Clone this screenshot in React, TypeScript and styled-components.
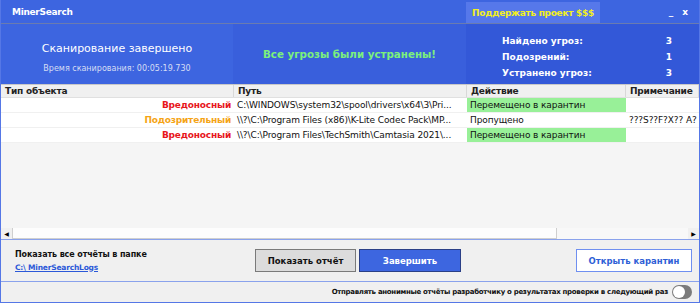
import React from "react";
import styled, { createGlobalStyle } from "styled-components";

const GlobalStyle = createGlobalStyle`
  html, body { margin: 0; padding: 0; }
  body { font-family: "DejaVu Sans", Verdana, sans-serif; }
  * { box-sizing: border-box; }
`;

const Window = styled.div`
  width: 700px;
  height: 303px;
  border: 1px solid #5577e6;
  border-top: none;
  background: #f0f0f0;
  display: flex;
  flex-direction: column;
  overflow: hidden;
`;

const TitleBar = styled.div`
  height: 24px;
  background: #3d65e0;
  border-bottom: 1px solid #6a7bb0;
  display: grid;
  grid-template-columns: 465px 134px 1fr;
  align-items: stretch;
`;

const Title = styled.div`
  color: #fff;
  font-weight: bold;
  font-size: 9px;
  letter-spacing: -0.3px;
  padding-left: 11px;
  display: flex;
  align-items: center;
`;

const DonateButton = styled.div`
  margin-top: 2px;
  background: #5678ea;
  color: #f2f020;
  font-weight: bold;
  font-size: 9px;
  letter-spacing: -0.3px;
  white-space: nowrap;
  display: flex;
  align-items: center;
  justify-content: center;
`;

const WinButtons = styled.div`
  display: flex;
  justify-content: flex-end;
  align-items: center;
  gap: 9px;
  padding-right: 11px;
  color: #fff;
  font-weight: bold;
  font-size: 9px;
`;

const Header = styled.div`
  height: 60px;
  display: grid;
  grid-template-columns: 232px 233px 1fr;
`;

const HeaderCell = styled.div<{ $bg: string; $padTop?: number }>`
  background: ${(p) => p.$bg};
  display: flex;
  flex-direction: column;
  align-items: center;
  justify-content: center;
  padding-top: ${(p) => p.$padTop || 0}px;
`;

const ScanTitle = styled.div`
  color: #fff;
  font-size: 11px;
`;

const ScanTime = styled.div`
  color: #d6ddf4;
  font-size: 8px;
  margin-top: 9px;
`;

const AllClear = styled.div`
  color: #7cf07c;
  font-weight: bold;
  font-size: 10.3px;
`;

const Stats = styled.div`
  width: 170px;
  margin-left: 36px;
  align-self: flex-start;
  display: flex;
  flex-direction: column;
  gap: 3px;
`;

const StatRow = styled.div`
  display: flex;
  justify-content: space-between;
  color: #fff;
  font-weight: bold;
  font-size: 9px;
  line-height: 13px;
`;

const Table = styled.div`
  flex: 1;
  background: #f5f5f5;
  display: flex;
  flex-direction: column;
  border-top: 1px solid #c8c8c8;
`;

const COLS = "233px 233px 159px 1fr";

const HeadRow = styled.div`
  display: grid;
  grid-template-columns: ${COLS};
  height: 13px;
  background: #f0f0f0;
  border-bottom: 1px solid #e0e0e0;
`;

const HeadCell = styled.div`
  font-weight: bold;
  font-size: 9px;
  letter-spacing: -0.2px;
  color: #222;
  padding-left: 4px;
  line-height: 13px;
  border-right: 1px solid #d8d8d8;
  white-space: nowrap;
  overflow: hidden;
`;

const Row = styled.div`
  display: grid;
  grid-template-columns: ${COLS};
  height: 15px;
  background: #fff;
  border-bottom: 1px solid #f0f0f0;
`;

const Cell = styled.div<{ $bg?: string; $color?: string; $bold?: boolean; $right?: boolean }>`
  background: ${(p) => p.$bg || "transparent"};
  color: ${(p) => p.$color || "#111"};
  font-weight: ${(p) => (p.$bold ? "bold" : "normal")};
  letter-spacing: ${(p) => (p.$bold ? "-0.2px" : "-0.1px")};
  text-align: ${(p) => (p.$right ? "right" : "left")};
  font-size: 9px;
  line-height: 15px;
  padding: 0 3px;
  white-space: nowrap;
  overflow: hidden;
`;

const TableFill = styled.div`
  flex: 1;
`;

const ScrollBar = styled.div`
  height: 11px;
  display: flex;
  align-items: stretch;
  background: #f0f0f0;
`;

const ScrollArrow = styled.div`
  width: 11px;
  display: flex;
  align-items: center;
  justify-content: center;
  font-size: 6px;
  color: #000;
`;

const ScrollTrack = styled.div`
  flex: 1;
  display: flex;
  background: #f8f8f8;
`;

const ScrollThumb = styled.div`
  width: 545px;
  background: #fdfdfd;
  border: 1px solid #cfcfcf;
  border-top: none;
`;

const Bottom = styled.div`
  height: 42px;
  border-top: 1px solid #8aa2ec;
  display: flex;
  align-items: center;
  padding: 0 7px 0 14px;
`;

const Folder = styled.div`
  width: 240px;
  display: flex;
  flex-direction: column;
  gap: 4px;
`;

const FolderLabel = styled.div`
  font-size: 8px;
  font-weight: bold;
  letter-spacing: -0.1px;
  color: #111;
`;

const FolderLink = styled.a`
  font-size: 7.5px;
  font-weight: bold;
  letter-spacing: -0.2px;
  color: #2b58d8;
  text-decoration: underline;
`;

const Btn = styled.div<{ $variant: "grey" | "blue" | "outline" }>`
  height: 23px;
  display: flex;
  align-items: center;
  justify-content: center;
  font-weight: bold;
  font-size: 8.5px;
  border: 1px solid
    ${(p) => (p.$variant === "grey" ? "#7a7a7a" : p.$variant === "blue" ? "#2a3f86" : "#6f8ff0")};
  background: ${(p) => (p.$variant === "grey" ? "#dcdcdc" : p.$variant === "blue" ? "#3d66e0" : "#fff")};
  color: ${(p) => (p.$variant === "grey" ? "#111" : p.$variant === "blue" ? "#fff" : "#2f5fd6")};
`;

const BtnGroup = styled.div`
  display: flex;
  gap: 3px;
`;

const Spacer = styled.div`
  flex: 1;
`;

const Footer = styled.div`
  flex: 0 0 21px;
  border-top: 1px solid #8aa2ec;
  display: flex;
  align-items: center;
  justify-content: flex-end;
  gap: 4px;
  padding-right: 7px;
`;

const FooterText = styled.div`
  font-size: 7px;
  font-weight: bold;
  letter-spacing: -0.3px;
  color: #111;
`;

const Toggle = styled.div`
  width: 20px;
  height: 14px;
  border-radius: 7px;
  background: #7b7b7b;
  position: relative;
`;

const Knob = styled.div`
  position: absolute;
  left: 1px;
  top: 1px;
  width: 12px;
  height: 12px;
  border-radius: 50%;
  background: #fff;
`;

const rows = [
  {
    type: "Вредоносный",
    color: "#e8161c",
    path: "C:\\WINDOWS\\system32\\spool\\drivers\\x64\\3\\Pri...",
    action: "Перемещено в карантин",
    green: true,
    note: "",
  },
  {
    type: "Подозрительный",
    color: "#f5a416",
    path: "\\\\?\\C:\\Program Files (x86)\\K-Lite Codec Pack\\MP...",
    action: "Пропущено",
    green: false,
    note: "???S??F?X?? A?",
  },
  {
    type: "Вредоносный",
    color: "#e8161c",
    path: "\\\\?\\C:\\Program Files\\TechSmith\\Camtasia 2021\\...",
    action: "Перемещено в карантин",
    green: true,
    note: "",
  },
];

export default function App() {
  return (
    <>
      <GlobalStyle />
      <Window>
        <TitleBar>
          <Title>MinerSearch</Title>
          <DonateButton>Поддержать проект $$$</DonateButton>
          <WinButtons>
            <span>_</span>
            <span>x</span>
          </WinButtons>
        </TitleBar>
        <Header>
          <HeaderCell $bg="#3d65e0" $padTop={7}>
            <ScanTitle>Сканирование завершено</ScanTitle>
            <ScanTime>Время сканирования: 00:05:19.730</ScanTime>
          </HeaderCell>
          <HeaderCell $bg="#395fdc">
            <AllClear>Все угрозы были устранены!</AllClear>
          </HeaderCell>
          <HeaderCell $bg="#3358d8" $padTop={6}>
            <Stats>
              <StatRow><span>Найдено угроз:</span><span>3</span></StatRow>
              <StatRow><span>Подозрений:</span><span>1</span></StatRow>
              <StatRow><span>Устранено угроз:</span><span>3</span></StatRow>
            </Stats>
          </HeaderCell>
        </Header>
        <Table>
          <HeadRow>
            <HeadCell>Тип объекта</HeadCell>
            <HeadCell>Путь</HeadCell>
            <HeadCell>Действие</HeadCell>
            <HeadCell>Примечание</HeadCell>
          </HeadRow>
          {rows.map((r, i) => (
            <Row key={i}>
              <Cell $bold $right $color={r.color}>{r.type}</Cell>
              <Cell>{r.path}</Cell>
              <Cell $bg={r.green ? "#98f098" : undefined}>{r.action}</Cell>
              <Cell>{r.note}</Cell>
            </Row>
          ))}
          <TableFill />
          <ScrollBar>
            <ScrollArrow>◀</ScrollArrow>
            <ScrollTrack>
              <ScrollThumb />
            </ScrollTrack>
            <ScrollArrow>▶</ScrollArrow>
          </ScrollBar>
        </Table>
        <Bottom>
          <Folder>
            <FolderLabel>Показать все отчёты в папке</FolderLabel>
            <FolderLink>C:\ MinerSearchLogs</FolderLink>
          </Folder>
          <BtnGroup>
            <Btn $variant="grey" style={{ width: 101 }}>Показать отчёт</Btn>
            <Btn $variant="blue" style={{ width: 102 }}>Завершить</Btn>
          </BtnGroup>
          <Spacer />
          <Btn $variant="outline" style={{ width: 116 }}>Открыть карантин</Btn>
        </Bottom>
        <Footer>
          <FooterText>Отправлять анонимные отчёты разработчику о результатах проверки в следующий раз</FooterText>
          <Toggle><Knob /></Toggle>
        </Footer>
      </Window>
    </>
  );
}
